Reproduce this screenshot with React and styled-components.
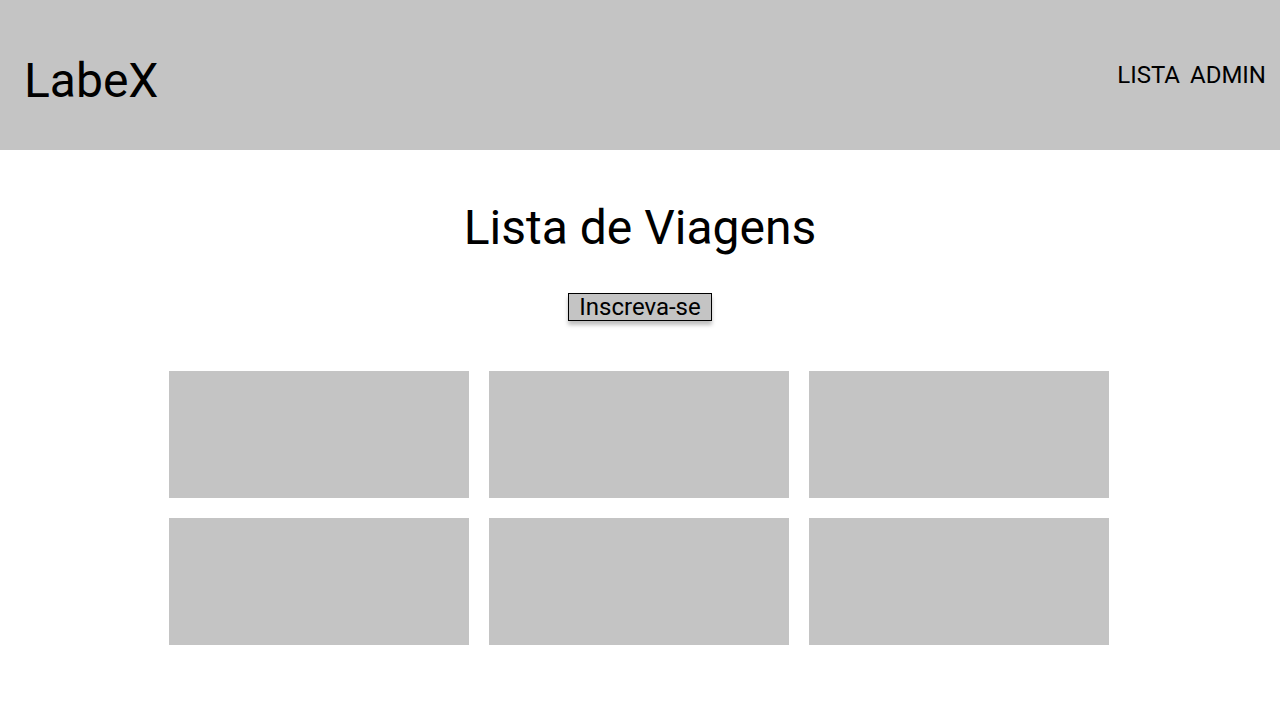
import React from 'react';
import styled, { createGlobalStyle } from 'styled-components';

const GlobalStyle = createGlobalStyle`
  body {
    margin: 0;
    font-family: Roboto, "Liberation Sans", sans-serif;
    background: #ffffff;
    color: #000000;
  }
`;

const Header = styled.header`
  height: 150px;
  background: #c4c4c4;
  display: flex;
  align-items: center;
  justify-content: space-between;
  padding: 0 14px 0 24px;
`;

const Logo = styled.h1`
  margin: 10px 0 0;
  font-size: 48px;
  font-weight: 400;
`;

const Nav = styled.nav`
  display: flex;
  gap: 10px;
`;

const NavLink = styled.span`
  font-size: 24px;
  cursor: pointer;
`;

const Main = styled.main`
  display: flex;
  flex-direction: column;
  align-items: center;
  padding-top: 50px;
`;

const Title = styled.h2`
  margin: 0;
  font-size: 48px;
  font-weight: 400;
  line-height: 56px;
`;

const Button = styled.button`
  margin-top: 37px;
  font-family: inherit;
  font-size: 24px;
  line-height: 26px;
  padding: 0 10px;
  background: #c4c4c4;
  border: 1px solid #000;
  box-shadow: 0 4px 4px rgba(0, 0, 0, 0.25);
  cursor: pointer;
`;

const Grid = styled.div`
  margin: 50px 2px 0 0;
  display: grid;
  grid-template-columns: repeat(3, 300px);
  grid-auto-rows: 127px;
  gap: 20px;
`;

const Card = styled.div`
  background: #c4c4c4;
`;

const App = () => {
  return (
    <>
      <GlobalStyle />
      <Header>
        <Logo>LabeX</Logo>
        <Nav>
          <NavLink>LISTA</NavLink>
          <NavLink>ADMIN</NavLink>
        </Nav>
      </Header>
      <Main>
        <Title>Lista de Viagens</Title>
        <Button>Inscreva-se</Button>
        <Grid>
          {[1, 2, 3, 4, 5, 6].map((n) => (
            <Card key={n} />
          ))}
        </Grid>
      </Main>
    </>
  );
};

export default App;
